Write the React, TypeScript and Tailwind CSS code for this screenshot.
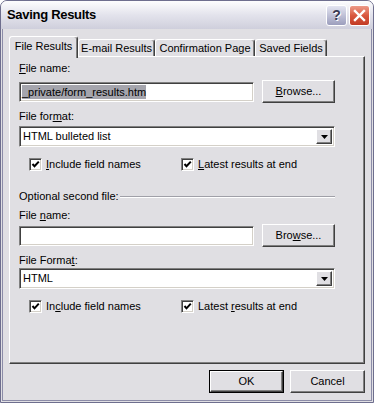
import React from "react";

const raised =
  "border border-t-white border-l-white border-r-[#404040] border-b-[#404040] shadow-[inset_-1px_-1px_0_#808080]";
const sunken =
  "border border-t-[#808080] border-l-[#808080] border-r-white border-b-white shadow-[inset_1px_1px_0_#404040,inset_-1px_-1px_0_#d4d0c8]";

function Key({ text, k }: { text: string; k: number }) {
  return (
    <>
      {text.slice(0, k)}
      <u>{text[k]}</u>
      {text.slice(k + 1)}
    </>
  );
}

function Label({ text, k, mt }: { text: string; k: number; mt: string }) {
  return (
    <div className={`${mt} h-[13px] leading-[13px]`}>
      <Key text={text} k={k} />
    </div>
  );
}

function Button({ children, w, def }: { children: React.ReactNode; w: string; def?: boolean }) {
  const inner = (
    <div className={`h-full w-full ${raised} flex items-center justify-center`}>{children}</div>
  );
  return (
    <div className={`${w} h-[23px] bg-[#e0dfe3] ${def ? "border border-black" : ""}`}>{inner}</div>
  );
}

function Check({ text, k }: { text: string; k: number }) {
  return (
    <div className="flex items-center gap-[4px]">
      <div className={`w-[13px] h-[13px] bg-white ${sunken} relative`}>
        <svg width="13" height="13" viewBox="0 0 13 13" className="absolute -left-px -top-px">
          <path d="M3.5 6 L5.5 8.3 L9.8 3.6" stroke="#000" strokeWidth="2" fill="none" />
        </svg>
      </div>
      <span className="leading-[13px]">
        <Key text={text} k={k} />
      </span>
    </div>
  );
}

function Select({ value, mt }: { value: string; mt: string }) {
  return (
    <div className={`${mt} w-[316px] h-[21px] bg-white ${sunken} flex items-center p-[2px]`}>
      <span className="flex-1 pl-[1px] leading-[13px]">{value}</span>
      <div className={`w-[16px] h-[15px] bg-[#e0dfe3] ${raised} flex items-center justify-center`}>
        <svg width="7" height="4" viewBox="0 0 7 4">
          <path d="M0 0 H7 L3.5 4 Z" fill="#000" />
        </svg>
      </div>
    </div>
  );
}

function FileRow({ mt, value, browseKey }: { mt: string; value?: string; browseKey: number }) {
  return (
    <div className={`${mt} flex items-center gap-[8px] h-[23px]`}>
      <div className={`w-[235px] h-[20px] bg-white ${sunken} flex items-center pl-[2px]`}>
        {value && <span className="bg-[#a5a5ad] leading-[14px]">{value}</span>}
      </div>
      <Button w="w-[73px]">
        <Key text="Browse..." k={browseKey} />
      </Button>
    </div>
  );
}

function Tab({ label, w, active }: { label: string; w: string; active?: boolean }) {
  return (
    <div
      className={`${w} ${
        active ? "h-[22px] relative z-10 pb-[2px]" : "h-[17px] mt-[3px]"
      } bg-[#e0dfe3] border-t border-l border-t-white border-l-white border-r border-r-[#404040] shadow-[inset_-1px_0_0_#808080] rounded-t-[3px] flex items-center justify-center`}
    >
      {label}
    </div>
  );
}

export default function App() {
  return (
    <div className="w-[374px] h-[403px] bg-white font-['Liberation_Sans',Arial,sans-serif] text-[11px] text-black">
      <div className="w-full h-full flex flex-col rounded-t-[7px] border border-[#6e6e8e] bg-[#e0dfe3] overflow-hidden">
        <div className="h-[28px] shrink-0 flex items-center pl-[6px] pr-[3px] bg-gradient-to-b from-[#fdfdfe] via-[#e3e3ec] to-[#cfcfdc]">
          <span className="flex-1 text-[13px] font-bold tracking-[-0.3px]">Saving Results</span>
          <div className="w-[21px] h-[21px] rounded-[3px] border border-white bg-gradient-to-b from-[#e4e5f1] to-[#9c9ebd] flex items-center justify-center text-[14px] font-bold text-[#3a3a52] [text-shadow:1px_1px_0_#fff]">
            ?
          </div>
          <div className="ml-[2px] w-[21px] h-[21px] rounded-[3px] border border-white bg-gradient-to-b from-[#ec9a88] via-[#d9583f] to-[#c23a24] flex items-center justify-center">
            <svg width="13" height="13" viewBox="0 0 13 13">
              <path d="M2 2 L11 11 M11 2 L2 11" stroke="#fff" strokeWidth="2.4" strokeLinecap="square" />
            </svg>
          </div>
        </div>
        <div className="flex-1 mx-[1px] mb-[1px] border-x border-b border-[#8c8ca8] flex flex-col px-[6px]">
          <div className="mt-[7px] flex items-start">
            <Tab label="File Results" w="w-[69px]" active />
            <Tab label="E-mail Results" w="w-[77px]" />
            <Tab label="Confirmation Page" w="w-[100px]" />
            <Tab label="Saved Fields" w="w-[72px]" />
          </div>
          <div className="-mt-[2px] h-[308px] border-l border-t border-l-white border-t-white border-r border-b border-r-[#404040] border-b-[#404040] shadow-[inset_-1px_-1px_0_#808080] pl-[9px] flex flex-col">
            <Label text="File name:" k={0} mt="mt-[5px]" />
            <FileRow mt="mt-[5px]" value="_private/form_results.htm" browseKey={0} />
            <Label text="File format:" k={8} mt="mt-[7px]" />
            <Select value="HTML bulleted list" mt="mt-[3px]" />
            <div className="mt-[11px] flex pl-[10px] h-[13px]">
              <div className="w-[152px]">
                <Check text="Include field names" k={0} />
              </div>
              <Check text="Latest results at end" k={0} />
            </div>
            <div className="mt-[19px] w-[316px] h-[13px] flex items-center">
              <span className="leading-[13px]">Optional second file:</span>
              <div className="flex-1 ml-[1px] border-t border-t-[#a0a0a8] border-b border-b-white" />
            </div>
            <Label text="File name:" k={5} mt="mt-[6px]" />
            <FileRow mt="mt-[2px]" browseKey={3} />
            <Label text="File Format:" k={10} mt="mt-[7px]" />
            <Select value="HTML" mt="mt-[1px]" />
            <div className="mt-[11px] flex pl-[10px] h-[13px]">
              <div className="w-[152px]">
                <Check text="Include field names" k={2} />
              </div>
              <Check text="Latest results at end" k={7} />
            </div>
          </div>
          <div className="mt-[6px] flex justify-end gap-[6px]">
            <Button w="w-[75px]" def>
              OK
            </Button>
            <Button w="w-[75px]">Cancel</Button>
          </div>
        </div>
      </div>
    </div>
  );
}
